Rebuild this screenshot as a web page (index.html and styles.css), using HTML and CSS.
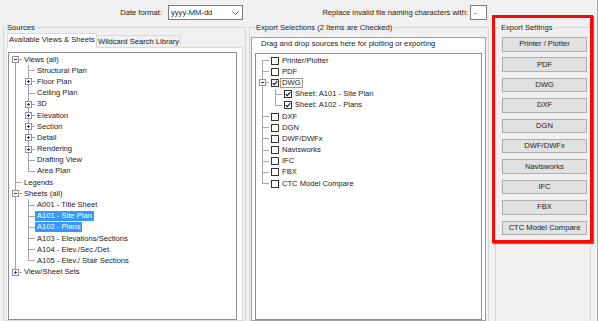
FILE: index.html
```html
<!DOCTYPE html>
<html lang="en">
<head>
    <meta charset="UTF-8">
    <title>Export</title>
    <link rel="stylesheet" href="styles.css">
</head>
<body>

<div class="window">

    <div class="topbar">
        <div class="field date">
            <span class="caption">Date format:</span>
            <div class="combo">
                <span>yyyy-MM-dd</span>
                <svg width="7" height="4" viewBox="0 0 7 4"><polyline points="0.5,0.5 3.5,3.5 6.5,0.5" fill="none" stroke="#5a5a5a"/></svg>
            </div>
        </div>
        <div class="field replace">
            <span class="caption">Replace invalid file naming characters with:</span>
            <div class="textbox">-</div>
        </div>
    </div>

    <div class="main">

        <!-- 左侧 来源 -->
        <fieldset class="group sources">
            <legend>Sources</legend>
            <div class="tabs">
                <div class="tab active">Available Views &amp; Sheets</div>
                <div class="tab">Wildcard Search Library</div>
            </div>
            <div class="tab-page">
                <ul class="tree">
                    <li class="row"><span class="g start"><i class="box minus"></i></span><span class="lbl">Views (all)</span></li>
                    <li class="row"><span class="g pipe"></span><span class="g tee"></span><span class="lbl">Structural Plan</span></li>
                    <li class="row"><span class="g pipe"></span><span class="g tee"><i class="box plus"></i></span><span class="lbl">Floor Plan</span></li>
                    <li class="row"><span class="g pipe"></span><span class="g tee"></span><span class="lbl">Ceiling Plan</span></li>
                    <li class="row"><span class="g pipe"></span><span class="g tee"><i class="box plus"></i></span><span class="lbl">3D</span></li>
                    <li class="row"><span class="g pipe"></span><span class="g tee"><i class="box plus"></i></span><span class="lbl">Elevation</span></li>
                    <li class="row"><span class="g pipe"></span><span class="g tee"><i class="box plus"></i></span><span class="lbl">Section</span></li>
                    <li class="row"><span class="g pipe"></span><span class="g tee"><i class="box plus"></i></span><span class="lbl">Detail</span></li>
                    <li class="row"><span class="g pipe"></span><span class="g tee"><i class="box plus"></i></span><span class="lbl">Rendering</span></li>
                    <li class="row"><span class="g pipe"></span><span class="g tee"></span><span class="lbl">Drafting View</span></li>
                    <li class="row"><span class="g pipe"></span><span class="g end"></span><span class="lbl">Area Plan</span></li>
                    <li class="row"><span class="g tee"></span><span class="lbl">Legends</span></li>
                    <li class="row"><span class="g tee"><i class="box minus"></i></span><span class="lbl">Sheets (all)</span></li>
                    <li class="row"><span class="g pipe"></span><span class="g tee"></span><span class="lbl">A001 - Title Sheet</span></li>
                    <li class="row"><span class="g pipe"></span><span class="g tee"></span><span class="lbl selected">A101 - Site Plan</span></li>
                    <li class="row"><span class="g pipe"></span><span class="g tee"></span><span class="lbl selected">A102 - Plans</span></li>
                    <li class="row"><span class="g pipe"></span><span class="g tee"></span><span class="lbl">A103 - Elevations/Sections</span></li>
                    <li class="row"><span class="g pipe"></span><span class="g tee"></span><span class="lbl">A104 - Elev./Sec./Det.</span></li>
                    <li class="row"><span class="g pipe"></span><span class="g end"></span><span class="lbl">A105 - Elev./ Stair Sections</span></li>
                    <li class="row"><span class="g end"><i class="box plus"></i></span><span class="lbl">View/Sheet Sets</span></li>
                </ul>
            </div>
        </fieldset>

        <!-- 中间 导出选择 -->
        <fieldset class="group selections">
            <legend>Export Selections (2 Items are Checked)</legend>
            <div class="drop-panel">
                <div class="drop-hint">Drag and drop sources here for plotting or exporting</div>
                <ul class="tree checks">
                    <li class="row"><span class="g start"></span><i class="chk"></i><span class="lbl">Printer/Plotter</span></li>
                    <li class="row"><span class="g tee"></span><i class="chk"></i><span class="lbl">PDF</span></li>
                    <li class="row"><span class="g tee"><i class="box minus"></i></span><i class="chk on"><svg width="6" height="6" viewBox="0 0 6 6"><polyline points="0.7,3 2.3,4.6 5.3,1.1" fill="none" stroke="#1a1a1a" stroke-width="1.1"/></svg></i><span class="lbl focus">DWG</span></li>
                    <li class="row"><span class="g pipe"></span><span class="g tee"></span><i class="chk on"><svg width="6" height="6" viewBox="0 0 6 6"><polyline points="0.7,3 2.3,4.6 5.3,1.1" fill="none" stroke="#1a1a1a" stroke-width="1.1"/></svg></i><span class="lbl">Sheet: A101 - Site Plan</span></li>
                    <li class="row"><span class="g pipe"></span><span class="g end"></span><i class="chk on"><svg width="6" height="6" viewBox="0 0 6 6"><polyline points="0.7,3 2.3,4.6 5.3,1.1" fill="none" stroke="#1a1a1a" stroke-width="1.1"/></svg></i><span class="lbl">Sheet: A102 - Plans</span></li>
                    <li class="row"><span class="g tee"></span><i class="chk"></i><span class="lbl">DXF</span></li>
                    <li class="row"><span class="g tee"></span><i class="chk"></i><span class="lbl">DGN</span></li>
                    <li class="row"><span class="g tee"></span><i class="chk"></i><span class="lbl">DWF/DWFx</span></li>
                    <li class="row"><span class="g tee"></span><i class="chk"></i><span class="lbl">Navisworks</span></li>
                    <li class="row"><span class="g tee"></span><i class="chk"></i><span class="lbl">IFC</span></li>
                    <li class="row"><span class="g tee"></span><i class="chk"></i><span class="lbl">FBX</span></li>
                    <li class="row"><span class="g end"></span><i class="chk"></i><span class="lbl">CTC Model Compare</span></li>
                </ul>
            </div>
        </fieldset>

        <!-- 右侧 导出设置 -->
        <fieldset class="group settings">
            <legend>Export Settings</legend>
            <div class="buttons">
                <button>Printer / Plotter</button>
                <button>PDF</button>
                <button>DWG</button>
                <button>DXF</button>
                <button>DGN</button>
                <button>DWF/DWFx</button>
                <button>Navisworks</button>
                <button>IFC</button>
                <button>FBX</button>
                <button>CTC Model Compare</button>
            </div>
        </fieldset>

    </div>

    <div class="markup"></div>

</div>

</body>
</html>
```

FILE: styles.css
```css
* {
    margin: 0px;
    padding: 0px;
    box-sizing: border-box;
}

body {
    background-color: #f0f0f0;
    font-family: "Liberation Sans", Arial, sans-serif;
    font-size: 7.6px;
    color: #1a1a1a;
}

ul {
    list-style: none;
}

.window {
    width: 598px;
    height: 321px;
    overflow: hidden;
    position: relative;
    background-color: #f0f0f0;
    border-right: 1px solid #a8a8a8;
}

/* 顶部 */

.topbar {
    display: grid;
    grid-template-columns: 246px 243px;
    height: 22px;
    padding-top: 5px;
}

.field {
    display: flex;
    justify-content: flex-end;
    align-items: center;
    height: 15px;
}

.date {
    padding-right: 3px;
}

.date .caption {
    margin-right: 6px;
}

.replace {
    padding-right: 2px;
}

.replace .caption {
    margin-right: 2px;
}

.combo {
    width: 75px;
    height: 15px;
    border: 1px solid #7a7a7a;
    background-color: #fff;
    display: flex;
    align-items: center;
    justify-content: space-between;
    padding: 0px 3px 0px 2px;
}

.textbox {
    width: 17px;
    height: 15px;
    border: 1px solid #7a7a7a;
    background-color: #fff;
    padding-left: 3px;
    line-height: 13px;
}

/* 分组 */

.main {
    display: flex;
    height: 300px;
}

.group {
    border: 1px solid #d5d5d5;
    min-width: 0px;
    display: flex;
    flex-direction: column;
}

.group legend {
    line-height: 11px;
    padding: 0px 1px;
}

.sources {
    margin-left: 3px;
    width: 243px;
    padding: 0px 2px;
}

.selections {
    margin-left: 3px;
    width: 240px;
    padding: 0px;
}

.selections legend {
    margin-left: 5px;
}

.settings {
    margin-left: 6px;
    width: 96px;
    padding: 0px 3px 0px 4px;
}

/* 选项卡 */

.tabs {
    display: flex;
    align-items: flex-end;
    height: 14px;
    padding-left: 1px;
}

.tab {
    width: 84px;
    height: 12px;
    line-height: 11px;
    text-align: center;
    border: 1px solid #d9d9d9;
    border-left: none;
    border-bottom: none;
    background-color: #f0f0f0;
}

.tab.active {
    width: 90px;
    height: 15px;
    margin-bottom: -1px;
    line-height: 12px;
    border-left: 1px solid #d9d9d9;
    background-color: #fff;
    position: relative;
}

.tab-page {
    flex: 1;
    border: 1px solid #d9d9d9;
    background-color: #fff;
    padding: 4px 5px 0px 1px;
}

/* 树 */

.tree {
    --line: #a6a6a6;
    height: 100%;
    border: 1px solid #8a8f98;
    background-color: #fff;
    padding-top: 1px;
}

.row {
    display: flex;
    height: 11.2px;
}

.g {
    width: 13px;
    flex: none;
    display: flex;
    align-items: center;
}

.pipe {
    background: linear-gradient(var(--line), var(--line)) 6px 0 / 1px 100% no-repeat;
}

.tee {
    background:
        linear-gradient(var(--line), var(--line)) 6px 0 / 1px 100% no-repeat,
        linear-gradient(var(--line), var(--line)) 6px 50% / 7px 1px no-repeat;
}

.end {
    background:
        linear-gradient(var(--line), var(--line)) 6px 0 / 1px 50% no-repeat,
        linear-gradient(var(--line), var(--line)) 6px 50% / 7px 1px no-repeat;
}

.start {
    background:
        linear-gradient(var(--line), var(--line)) 6px 100% / 1px 50% no-repeat,
        linear-gradient(var(--line), var(--line)) 6px 50% / 7px 1px no-repeat;
}

.box {
    width: 7px;
    height: 7px;
    margin-left: 3px;
    border: 1px solid #919191;
}

.box.minus {
    background: linear-gradient(#2c3550, #2c3550) center / 3px 1px no-repeat, #fff;
}

.box.plus {
    background:
        linear-gradient(#2c3f80, #2c3f80) center / 3px 1px no-repeat,
        linear-gradient(#2c3f80, #2c3f80) center / 1px 3px no-repeat,
        #fff;
}

.lbl {
    align-self: center;
    line-height: 10px;
    padding: 0px 2px;
    white-space: nowrap;
}

.lbl.selected {
    background-color: #3399ff;
    color: #fff;
}

/* 导出选择 */

.drop-panel {
    flex: 1;
    margin: 4px 2px 0px 1px;
    border: 1px solid #a0a0a0;
    background-color: #fff;
    display: flex;
    flex-direction: column;
    padding: 0px 3px;
}

.drop-hint {
    height: 15px;
    line-height: 11px;
    padding-left: 6px;
}

.checks {
    flex: 1;
}

.chk {
    width: 8px;
    height: 8px;
    flex: none;
    align-self: center;
    margin: 0px 2px;
    border: 1px solid #333;
    background-color: #fff;
    display: flex;
}

.checks .lbl {
    padding: 0px 1px;
    margin-left: 0px;
}

.lbl.focus {
    border: 1px solid #9a9a9a;
    line-height: 8px;
    margin-left: -1px;
}

/* 导出设置按钮 */

.buttons {
    display: flex;
    flex-direction: column;
    gap: 5.9px;
    padding: 4px 0px 0px 2px;
}

button {
    height: 14.5px;
    border: 1px solid #adadad;
    background-color: #e1e1e1;
    font-family: "Liberation Sans", Arial, sans-serif;
    font-size: 7.6px;
    color: #1a1a1a;
    line-height: 12px;
    text-align: center;
}

/* 红色标注框 */

.markup {
    position: absolute;
    left: 492px;
    top: 15px;
    width: 101px;
    height: 228px;
    border: 3px solid #f20d0d;
    box-shadow: 1px 1px 1px rgba(60, 0, 0, 0.55);
    pointer-events: none;
}
```
